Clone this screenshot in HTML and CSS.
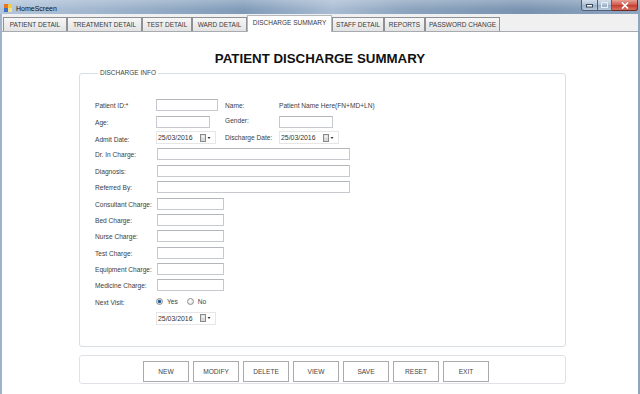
FILE: index.html
```html
<!DOCTYPE html>
<html>

<head>
    <title>HomeScreen</title>
    <meta charset="UTF-8">
    <link rel="stylesheet" href="styles.css">
</head>

<body>
    <div class="titlebar">
        <svg class="app-icon" width="8" height="8" viewBox="0 0 8 8">
            <rect x="0" y="0" width="4" height="4" fill="#e8742c" />
            <rect x="4" y="0" width="4" height="4" fill="#f1cf45" />
            <rect x="0" y="4" width="4" height="4" fill="#3b74c4" />
            <rect x="4" y="4" width="4" height="4" fill="#f3e08a" />
        </svg>
        <span class="title">HomeScreen</span>
        <div class="controls">
            <div class="ctl ctl-min">
                <svg width="7" height="4" viewBox="0 0 7 4"><rect x="0.5" y="0.5" width="6" height="2.5" fill="#fff" stroke="#38465a" stroke-width="1" /></svg>
            </div>
            <div class="ctl ctl-max">
                <svg width="7" height="6" viewBox="0 0 7 6"><rect x="0.5" y="0.5" width="6" height="5" fill="none" stroke="#e8eef5" stroke-width="1" /></svg>
            </div>
            <div class="ctl ctl-close">
                <svg width="8" height="7" viewBox="0 0 8 7"><path d="M1 0.5 L7 6.5 M7 0.5 L1 6.5" stroke="#fff" stroke-width="1.7" /></svg>
            </div>
        </div>
    </div>

    <div class="client">
        <div class="tabs">
            <div class="tab t-patient">PATIENT DETAIL</div>
            <div class="tab t-treatment">TREATMENT DETAIL</div>
            <div class="tab t-test">TEST DETAIL</div>
            <div class="tab t-ward">WARD DETAIL</div>
            <div class="tab t-discharge active">DISCHARGE SUMMARY</div>
            <div class="tab t-staff">STAFF DETAIL</div>
            <div class="tab t-reports">REPORTS</div>
            <div class="tab t-password">PASSWORD CHANGE</div>
        </div>

        <div class="page">
            <h1>PATIENT DISCHARGE SUMMARY</h1>

            <fieldset class="group">
                <legend>DISCHARGE INFO</legend>

                <div class="row">
                    <span class="lbl">Patient ID:*</span>
                    <div class="cell"><span class="box w-id"></span></div>
                    <span class="lbl2">Name:</span>
                    <span class="value">Patient Name Here(FN+MD+LN)</span>
                </div>
                <div class="row">
                    <span class="lbl">Age:</span>
                    <div class="cell"><span class="box w-age"></span></div>
                    <span class="lbl2 up">Gender:</span>
                    <span class="box w-age"></span>
                </div>
                <div class="row">
                    <span class="lbl down">Admit Date:</span>
                    <div class="cell">
                        <div class="date"><span>25/03/2016</span>
                            <svg class="cal" width="11" height="8" viewBox="0 0 11 8">
                                <rect x="0.5" y="0.5" width="5" height="7" fill="#d9d9d9" stroke="#8a8a8a" />
                                <rect x="1.5" y="1.5" width="3" height="2" fill="#f4f4f4" />
                                <path d="M7.5 3 L10.5 3 L9 5 Z" fill="#333" />
                            </svg>
                        </div>
                    </div>
                    <span class="lbl2">Discharge Date:</span>
                    <div class="date"><span>25/03/2016</span>
                        <svg class="cal" width="11" height="8" viewBox="0 0 11 8">
                            <rect x="0.5" y="0.5" width="5" height="7" fill="#d9d9d9" stroke="#8a8a8a" />
                            <rect x="1.5" y="1.5" width="3" height="2" fill="#f4f4f4" />
                            <path d="M7.5 3 L10.5 3 L9 5 Z" fill="#333" />
                        </svg>
                    </div>
                </div>
                <div class="row">
                    <span class="lbl">Dr. In Charge:</span>
                    <span class="box w-wide"></span>
                </div>
                <div class="row">
                    <span class="lbl">Diagnosis:</span>
                    <span class="box w-wide"></span>
                </div>
                <div class="row">
                    <span class="lbl">Referred By:</span>
                    <span class="box w-wide"></span>
                </div>
                <div class="row">
                    <span class="lbl">Consultant Charge:</span>
                    <span class="box w-charge"></span>
                </div>
                <div class="row">
                    <span class="lbl">Bed Charge:</span>
                    <span class="box w-charge"></span>
                </div>
                <div class="row">
                    <span class="lbl">Nurse Charge:</span>
                    <span class="box w-charge"></span>
                </div>
                <div class="row">
                    <span class="lbl">Test Charge:</span>
                    <span class="box w-charge"></span>
                </div>
                <div class="row">
                    <span class="lbl">Equipment Charge:</span>
                    <span class="box w-charge"></span>
                </div>
                <div class="row">
                    <span class="lbl">Medicine Charge:</span>
                    <span class="box w-charge"></span>
                </div>
                <div class="row">
                    <span class="lbl">Next Visit:</span>
                    <span class="radio checked"></span><span class="opt">Yes</span>
                    <span class="radio"></span><span class="opt">No</span>
                </div>
                <div class="row">
                    <span class="lbl"></span>
                    <div class="date"><span>25/03/2016</span>
                        <svg class="cal" width="11" height="8" viewBox="0 0 11 8">
                            <rect x="0.5" y="0.5" width="5" height="7" fill="#d9d9d9" stroke="#8a8a8a" />
                            <rect x="1.5" y="1.5" width="3" height="2" fill="#f4f4f4" />
                            <path d="M7.5 3 L10.5 3 L9 5 Z" fill="#333" />
                        </svg>
                    </div>
                </div>
            </fieldset>

            <div class="actions">
                <button type="button">NEW</button>
                <button type="button">MODIFY</button>
                <button type="button">DELETE</button>
                <button type="button">VIEW</button>
                <button type="button">SAVE</button>
                <button type="button">RESET</button>
                <button type="button">EXIT</button>
            </div>
        </div>
    </div>
</body>

</html>
```

FILE: styles.css
```css
* {
    margin: 0;
    padding: 0;
    box-sizing: border-box;
}

body {
    font-family: "Liberation Sans", Arial, sans-serif;
    width: 640px;
    height: 394px;
    overflow: hidden;
    background: linear-gradient(90deg, #9fb4cc, #8ea6c0);
    color: #333;
}

/* window title bar */
.titlebar {
    height: 14px;
    display: flex;
    align-items: center;
    padding-left: 4px;
    background:
        linear-gradient(rgba(255, 255, 255, 0.25), rgba(255, 255, 255, 0) 70%),
        linear-gradient(90deg, #b2c5da 0%, #9db3cc 18%, #7f9ab8 38%, #a9bcd2 52%, #8ba3be 64%, #7892b0 82%, #8fa6c0 100%);
}

.app-icon {
    margin-right: 4px;
    margin-top: 1px;
}

.title {
    flex: 1;
    font-size: 7px;
    color: #111;
    margin-top: 2px;
}

.controls {
    display: flex;
    align-self: flex-start;
    margin-right: 2px;
}

.ctl {
    height: 11px;
    display: flex;
    align-items: center;
    justify-content: center;
    border: 1px solid #4f6079;
    border-top: none;
    background: linear-gradient(#d4deea, #b0c1d5 50%, #98acc4 51%, #b9c9db);
}

.ctl-min {
    width: 17px;
    border-radius: 0 0 0 3px;
    align-items: flex-end;
    padding-bottom: 2px;
}

.ctl-max {
    width: 14px;
    border-left: none;
}

.ctl-close {
    width: 26px;
    border-left: none;
    border-radius: 0 0 3px 0;
    border-color: #6b2a26;
    background: linear-gradient(#e8a296, #d0564a 50%, #c23c2f 51%, #d8705f);
}

/* client area */
.client {
    margin: 0 2px;
    background: #f0f0f0;
    height: 380px;
}

.tabs {
    display: flex;
    align-items: flex-end;
    height: 17px;
    padding-left: 1px;
}

.tab {
    height: 14px;
    display: flex;
    align-items: center;
    justify-content: center;
    border: 1px solid #8d9196;
    border-bottom: none;
    background: linear-gradient(#f6f6f6, #e3e3e3);
    font-size: 6.5px;
    color: #3a3a3a;
    white-space: nowrap;
}

.tab.active {
    position: relative;
    height: 17px;
    margin-bottom: -1px;
    background: #fff;
    border-color: #b5b8bc;
    align-items: flex-start;
    padding-top: 3px;
}

.t-patient { width: 64px; }
.t-treatment { width: 75px; }
.t-test { width: 50px; }
.t-ward { width: 55px; }
.t-discharge { width: 85px; }
.t-staff { width: 52px; }
.t-reports { width: 41px; }
.t-password { width: 75px; }

.page {
    background: #fff;
    border-top: 1px solid #a7aaae;
    height: 363px;
    padding-top: 19px;
}

h1 {
    font-size: 13.3px;
    line-height: 16px;
    font-weight: bold;
    text-align: center;
    color: #111;
}

/* discharge info group */
.group {
    margin: 2px 0 0 77px;
    width: 487px;
    height: 278px;
    border: 1px solid #d9dee3;
    border-radius: 3px;
    padding: 20px 0 0 15px;
}

.group legend {
    font-size: 6.5px;
    line-height: 8px;
    padding: 0 2px;
    margin-left: 3px;
    color: #444;
}

.row {
    display: flex;
    align-items: center;
    height: 16.4px;
    font-size: 6.6px;
    color: #3c3c3c;
}

.lbl {
    width: 61px;
    flex-shrink: 0;
    margin-top: 1px;
}

.lbl.down {
    margin-top: 4px;
}

.cell {
    width: 69px;
    flex-shrink: 0;
}

.lbl2 {
    width: 54px;
    flex-shrink: 0;
}

.lbl2.up {
    margin-top: -3px;
}

.value {
    white-space: nowrap;
}

.box {
    display: block;
    height: 12px;
    border: 1px solid #c6c9cd;
    border-top-color: #b3b6ba;
    background: #fff;
}

.w-id { width: 62px; }
.w-age { width: 54px; }
.w-wide { width: 193px; margin-left: 1px; }
.w-charge { width: 67px; margin-left: 1px; }

.date {
    width: 60px;
    height: 13px;
    display: flex;
    align-items: center;
    justify-content: space-between;
    border: 1px solid #e6e6e6;
    padding: 0 4px 0 1px;
    font-size: 6.9px;
    color: #333;
    background: #fff;
}

.cal {
    display: block;
}

.radio {
    width: 7px;
    height: 7px;
    border-radius: 50%;
    border: 1px solid #8e8f8f;
    background: radial-gradient(circle at 40% 35%, #fff, #dcdcdc);
    margin-right: 4px;
    flex-shrink: 0;
}

.radio.checked {
    background: radial-gradient(circle, #1f4f86 0, #3a72b0 1.6px, #e6e6e6 2.1px, #f8f8f8);
}

.opt {
    margin-right: 9px;
}

/* button strip */
.actions {
    margin: 8px 0 0 77px;
    width: 487px;
    height: 29px;
    border: 1px solid #dfe3e7;
    border-radius: 3px;
    display: flex;
    gap: 4px;
    padding: 5px 0 0 63px;
}

button {
    width: 46px;
    height: 21px;
    background: #fff;
    border: 1px solid #aaaaaa;
    font-family: "Liberation Sans", Arial, sans-serif;
    font-size: 6.6px;
    color: #444;
}
```
